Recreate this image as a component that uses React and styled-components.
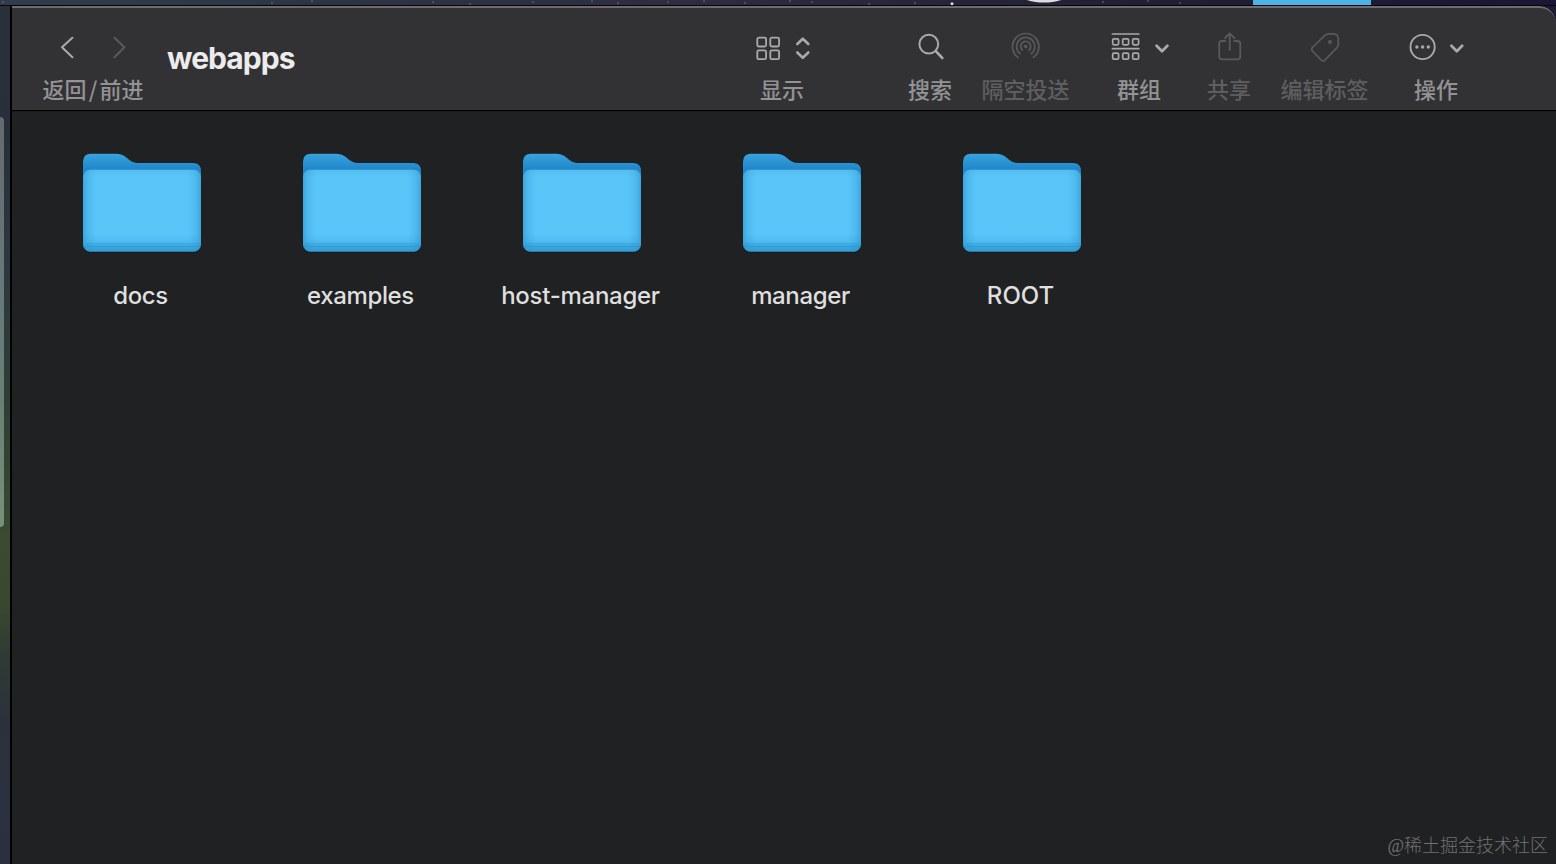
import React from 'react';
import styled, { createGlobalStyle } from 'styled-components';

const GlobalStyle = createGlobalStyle`
  * { box-sizing: border-box; }
  body { margin: 0; overflow: hidden; background: #1f2122; font-family: Inter, "Noto Sans CJK SC", sans-serif; }
`;

const Desktop = styled.div`
  width: 1556px;
  height: 864px;
  display: flex;
  flex-direction: column;
  background: #1c1b33;
`;

const Wallpaper = styled.svg`
  display: block;
  flex: none;
`;

const Row = styled.div`
  display: flex;
  flex: 1;
  min-height: 0;
`;

const LeftEdge = styled.div`
  width: 10px;
  padding-top: 111px;
  background: linear-gradient(180deg, #27303b 0, #27303a 120px, #2c3a3e 270px, #2e3f36 400px, #3a4b31 530px, #38482f 600px, #303a35 650px, #2b313c 720px, #2a3040 858px);
`;

const BackWindow = styled.div`
  width: 4px;
  height: 410px;
  border-radius: 0 4px 4px 0;
  background: linear-gradient(180deg, #66696e, #68777b 40%, #6b7f76 70%, #77907a);
`;

const Window = styled.div`
  flex: 1;
  display: flex;
  flex-direction: column;
  border-left: 2px solid #000;
  border-top-right-radius: 17px;
  overflow: hidden;
  background: #1f2122;
`;

const Toolbar = styled.header`
  height: 105px;
  display: flex;
  align-items: flex-start;
  padding: 23px 90px 0 30px;
  background: #323234;
  border-top: 2px solid #6d6d70;
  border-bottom: 1px solid #000;
  border-top-right-radius: 17px;
`;

const Tool = styled.div`
  width: ${(p) => p.$width}px;
  margin-left: ${(p) => p.$gap || 0}px;
  flex: none;
  display: flex;
  flex-direction: column;
  align-items: center;
  color: ${(p) => (p.$disabled ? '#59595b' : '#a9a9ab')};
`;

const Glyph = styled.svg`
  display: block;
  height: 32px;
  fill: none;
  stroke: currentColor;
  stroke-width: ${(p) => p.$weight || 1.8};
  stroke-linecap: round;
  stroke-linejoin: round;
`;

const ToolLabel = styled.span`
  margin-top: 13px;
  line-height: 24px;
  font-size: 22px;
  font-family: "Noto Sans CJK SC", sans-serif;
  font-weight: 500;
  white-space: nowrap;
  color: ${(p) => (p.$disabled ? '#5e5e60' : '#939395')};
`;

const Slash = styled.span`
  margin: 0 2.3px;
`;

const Title = styled.h1`
  flex: 1;
  margin: 9px 0 0 23px;
  font-size: 30px;
  line-height: 37px;
  font-weight: 700;
  letter-spacing: -0.95px;
  color: #ececec;
`;

const Content = styled.main`
  flex: 1;
  display: flex;
  flex-direction: column;
  justify-content: space-between;
  border-top: 1px solid #191b1c;
`;

const Files = styled.div`
  display: grid;
  grid-template-columns: repeat(5, 220px);
  padding: 38px 0 0 20px;
`;

const File = styled.div`
  display: flex;
  flex-direction: column;
  align-items: center;
`;

const FileName = styled.span`
  margin: 25px 3px 0 0;
  font-size: 24px;
  line-height: 30px;
  font-weight: 500;
  letter-spacing: ${(p) => p.$tracking}px;
  color: #dfdfdf;
`;

const Watermark = styled.div`
  align-self: flex-end;
  margin: 0 8px 5px 0;
  font-family: "Liberation Serif", "Noto Sans CJK SC", serif;
  font-size: 18px;
  line-height: 26px;
  font-weight: 300;
  color: #717273;
`;

const UpDown = 'M45.3 13l5.5-5.3 5.5 5.3M45.3 21.5l5.5 5.3 5.5-5.3';

function Folder() {
  return (
    <svg width="124" height="106" viewBox="0 0 124 106">
      <defs>
        <linearGradient id="back" x1="0" y1="0" x2="0" y2="1">
          <stop offset="0" stopColor="#38a3dd" />
          <stop offset=".18" stopColor="#2186ca" />
          <stop offset="1" stopColor="#2186ca" />
        </linearGradient>
        <linearGradient id="front" x1="0" y1="0" x2="0" y2="1">
          <stop offset="0" stopColor="#54bdf0" />
          <stop offset=".08" stopColor="#5ac5f8" />
          <stop offset=".78" stopColor="#5ac5f9" />
          <stop offset=".89" stopColor="#4eb9ef" />
          <stop offset=".92" stopColor="#3ca9e0" />
          <stop offset="1" stopColor="#309cd4" />
        </linearGradient>
        <linearGradient id="sides">
          <stop offset="0" stopColor="#248bc8" stopOpacity=".55" />
          <stop offset=".045" stopColor="#2b96d2" stopOpacity=".25" />
          <stop offset=".11" stopColor="#2b96d2" stopOpacity="0" />
          <stop offset=".89" stopColor="#2b96d2" stopOpacity="0" />
          <stop offset=".955" stopColor="#2b96d2" stopOpacity=".25" />
          <stop offset="1" stopColor="#248bc8" stopOpacity=".55" />
        </linearGradient>
      </defs>
      <rect x="3.5" y="90" width="117" height="13" rx="7" fill="#171a1d" />
      <path d="M3 12Q3 3.8 11 3.8H36Q42 3.8 47 8Q52 13 58 13H113Q121 13 121 21V90H3Z" fill="url(#back)" />
      <rect x="3" y="19.8" width="118" height="82" rx="7.5" fill="url(#front)" />
      <rect x="3" y="19.8" width="118" height="82" rx="7.5" fill="url(#sides)" />
      <path d="M6 93.5H118M5 96.5H119" stroke="#268fc9" strokeOpacity=".35" />
    </svg>
  );
}

const files = [
  ['docs', -0.4],
  ['examples', -0.38],
  ['host-manager', -0.27],
  ['manager', -0.38],
  ['ROOT', 0],
];

const stars = [
  [3, 2], [272, 3], [312, 1], [433, 2], [470, 4], [533, 2], [592, 1], [618, 3], [668, 2], [704, 1],
  [745, 3], [790, 1], [812, 2], [869, 4], [915, 3], [1103, 2], [1148, 1], [1180, 3],
];

export default function App() {
  return (
    <Desktop>
      <GlobalStyle />
      <Wallpaper width="1556" height="6" viewBox="0 0 1556 6">
        <defs>
          <linearGradient id="sky">
            <stop offset="0" stopColor="#303c4b" />
            <stop offset=".2" stopColor="#2d3545" />
            <stop offset=".45" stopColor="#2d2c40" />
            <stop offset=".75" stopColor="#211e35" />
            <stop offset="1" stopColor="#1a1736" />
          </linearGradient>
        </defs>
        <rect width="1556" height="6" fill="url(#sky)" />
        {stars.map(([x, y]) => (
          <circle key={x} cx={x} cy={y} r=".8" fill="#77778b" />
        ))}
        <circle cx="952" cy="3.8" r="1.5" fill="#dedee4" />
        <ellipse cx="1044" cy="-5" rx="23" ry="7.6" fill="#dddde0" />
        <rect x="1253" width="118" height="5" fill="#4cb4e4" />
        <rect y="5" width="1556" height="1" fill="#060608" />
      </Wallpaper>
      <Row>
        <LeftEdge>
          <BackWindow />
        </LeftEdge>
        <Window>
          <Toolbar>
            <Tool $width={102}>
              <Glyph width="102" $weight={2.1}>
                <path d="M30.4 6.8L20 16.3l10.4 9.9" />
                <path d="M72.5 6.8L82.4 16.3l-9.9 9.9" stroke="#59595b" />
              </Glyph>
              <ToolLabel>返回<Slash>/</Slash>前进</ToolLabel>
            </Tool>
            <Title>webapps</Title>
            <Tool $width={60}>
              <Glyph width="60">
                <rect x="5.3" y="6.7" width="8.8" height="8.8" rx="1.5" />
                <rect x="18.3" y="6.7" width="8.8" height="8.8" rx="1.5" />
                <rect x="5.3" y="19.4" width="8.8" height="8.8" rx="1.5" />
                <rect x="18.3" y="19.4" width="8.8" height="8.8" rx="1.5" />
                <path d={UpDown} strokeWidth="2.6" />
              </Glyph>
              <ToolLabel>显示</ToolLabel>
            </Tool>
            <Tool $width={44} $gap={96}>
              <Glyph width="44" $weight={2}>
                <circle cx="20.8" cy="13.2" r="9.4" />
                <path d="M27.8 20.2l6.5 6.8" strokeWidth="2.6" />
              </Glyph>
              <ToolLabel>搜索</ToolLabel>
            </Tool>
            <Tool $width={89} $gap={29} $disabled>
              <Glyph width="89" $weight={1.7}>
                <path d="M37 26.4A13.2 13.2 0 1 1 52.4 26.4" />
                <path d="M39.1 22.7A9.1 9.1 0 1 1 50.3 22.7" />
                <path d="M41.3 19.1A5 5 0 1 1 48.1 19.1" />
                <circle cx="44.7" cy="15.5" r="1.8" fill="currentColor" stroke="none" />
              </Glyph>
              <ToolLabel $disabled>隔空投送</ToolLabel>
            </Tool>
            <Tool $width={60} $gap={39}>
              <Glyph width="60" $weight={1.7}>
                <path d="M3.4 3H29.8M3.4 17.7H29.8" />
                {[3.7, 13.7, 23.7].map((x) => (
                  <React.Fragment key={x}>
                    <rect x={x} y="7.8" width="5.9" height="6" rx="1.3" />
                    <rect x={x} y="22.2" width="5.9" height="6" rx="1.3" />
                  </React.Fragment>
                ))}
                <path d="M47.6 14.7l5.4 5.6 5.4-5.6" strokeWidth="2.7" />
              </Glyph>
              <ToolLabel>群组</ToolLabel>
            </Tool>
            <Tool $width={44} $gap={38} $disabled>
              <Glyph width="44" $weight={1.8}>
                <path d="M18.3 10H15Q12.2 10 12.2 12.8V25.5Q12.2 28.3 15 28.3H30.5Q33.3 28.3 33.3 25.5V12.8Q33.3 10 30.5 10H27.2" />
                <path d="M22.7 19V2.5M18 7l4.7-4.7L27.4 7" />
              </Glyph>
              <ToolLabel $disabled>共享</ToolLabel>
            </Tool>
            <Tool $width={89} $gap={29} $disabled>
              <Glyph width="89" $weight={1.7}>
                <path d="M45.1 4.2Q46.6 2.8 48.7 2.8H53.4Q58.3 3.3 58.3 7.7V13Q58.3 15.2 56.8 16.8L44.8 29.2Q43.1 30.9 41.3 29.2L32.8 20.5Q30.6 18.2 32.8 16Z" />
                <circle cx="50" cy="11" r="1.2" />
              </Glyph>
              <ToolLabel $disabled>编辑标签</ToolLabel>
            </Tool>
            <Tool $width={60} $gap={37}>
              <Glyph width="60" $weight={1.9}>
                <circle cx="16.6" cy="16" r="12.1" />
                <g fill="currentColor" stroke="none">
                  <circle cx="10.9" cy="16" r="1.7" />
                  <circle cx="16.6" cy="16" r="1.7" />
                  <circle cx="22.3" cy="16" r="1.7" />
                </g>
                <path d="M45.4 14.7l5.4 5.6 5.4-5.6" strokeWidth="2.7" />
              </Glyph>
              <ToolLabel>操作</ToolLabel>
            </Tool>
          </Toolbar>
          <Content>
            <Files>
              {files.map(([name, tracking]) => (
                <File key={name}>
                  <Folder />
                  <FileName $tracking={tracking}>{name}</FileName>
                </File>
              ))}
            </Files>
            <Watermark>@稀土掘金技术社区</Watermark>
          </Content>
        </Window>
      </Row>
    </Desktop>
  );
}
